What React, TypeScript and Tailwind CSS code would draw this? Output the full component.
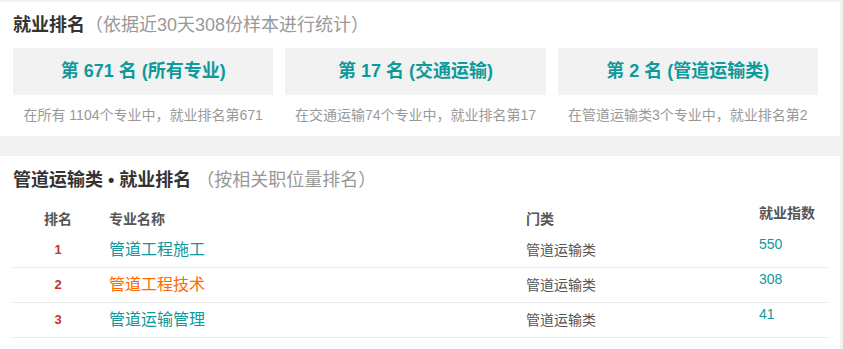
const font = { fontFamily: '"Liberation Sans", "Noto Sans CJK SC", sans-serif' };

const boxes = [
  { title: '第 671 名 (所有专业)', note: '在所有 1104个专业中，就业排名第671' },
  { title: '第 17 名 (交通运输)', note: '在交通运输74个专业中，就业排名第17' },
  { title: '第 2 名 (管道运输类)', note: '在管道运输类3个专业中，就业排名第2' },
];

const rows = [
  { rank: 1, name: '管道工程施工', hot: false, cat: '管道运输类', index: 550 },
  { rank: 2, name: '管道工程技术', hot: true, cat: '管道运输类', index: 308 },
  { rank: 3, name: '管道运输管理', hot: false, cat: '管道运输类', index: 41 },
];

export default function App() {
  return (
    <div className="min-h-[349px] w-[843px] overflow-hidden bg-[#f2f2f2] pt-[2px]" style={font}>
      <div className="w-[840px] bg-white pt-[11px] pb-[11px] pl-[13px]">
        <h2 className="h-[24px] text-[18px] leading-[24px] text-[#333]">
          <span className="font-bold">就业排名</span>
          <span className="text-[#999]">（依据近30天308份样本进行统计）</span>
        </h2>
        <div className="mt-[11px] grid w-[805px] grid-cols-3 gap-3">
          {boxes.map((b) => (
            <div key={b.title}>
              <div className="flex h-[47px] items-center justify-center bg-[#f2f2f2] text-[18px] font-bold text-[#0e9a9a]">
                {b.title}
              </div>
              <p className="mt-[10px] text-center text-[14px] leading-[20px] text-[#999]">{b.note}</p>
            </div>
          ))}
        </div>
      </div>

      <div className="mt-[20px] h-[200px] w-[840px] bg-white pt-[12px] pl-[13px]">
        <h2 className="h-[24px] text-[18px] leading-[24px] text-[#333]">
          <span className="font-bold">管道运输类 • 就业排名</span>
          <span className="text-[#999]"> （按相关职位量排名）</span>
        </h2>
        <div className="mt-[6px] w-[814px]">
          <div className="flex h-[35px] text-[14px] font-bold leading-[20px] text-[#555]">
            <div className="w-[90px] pt-[11px] text-center">排名</div>
            <div className="w-[417px] pt-[11px] pl-[6px]">专业名称</div>
            <div className="w-[233px] pt-[11px] pl-[6px]">门类</div>
            <div className="w-[74px] pt-[5px] pl-[6px]">就业指数</div>
          </div>
          {rows.map((r) => (
            <div key={r.rank} className="flex h-[35px] border-b border-[#e8e8e8] leading-[20px]">
              <div className="flex w-[90px] items-center justify-center text-[13px] font-bold text-[#c9302c]">
                {r.rank}
              </div>
              <div
                className={`flex w-[417px] items-center pl-[6px] text-[16px] ${
                  r.hot ? 'text-[#ff6a00]' : 'text-[#0e9a9a]'
                }`}
              >
                {r.name}
              </div>
              <div className="flex w-[233px] items-center pl-[6px] text-[14px] text-[#555]">{r.cat}</div>
              <div className="w-[74px] pt-[1px] pl-[6px] text-[14px] text-[#0e9a9a]">{r.index}</div>
            </div>
          ))}
        </div>
      </div>
    </div>
  );
}
